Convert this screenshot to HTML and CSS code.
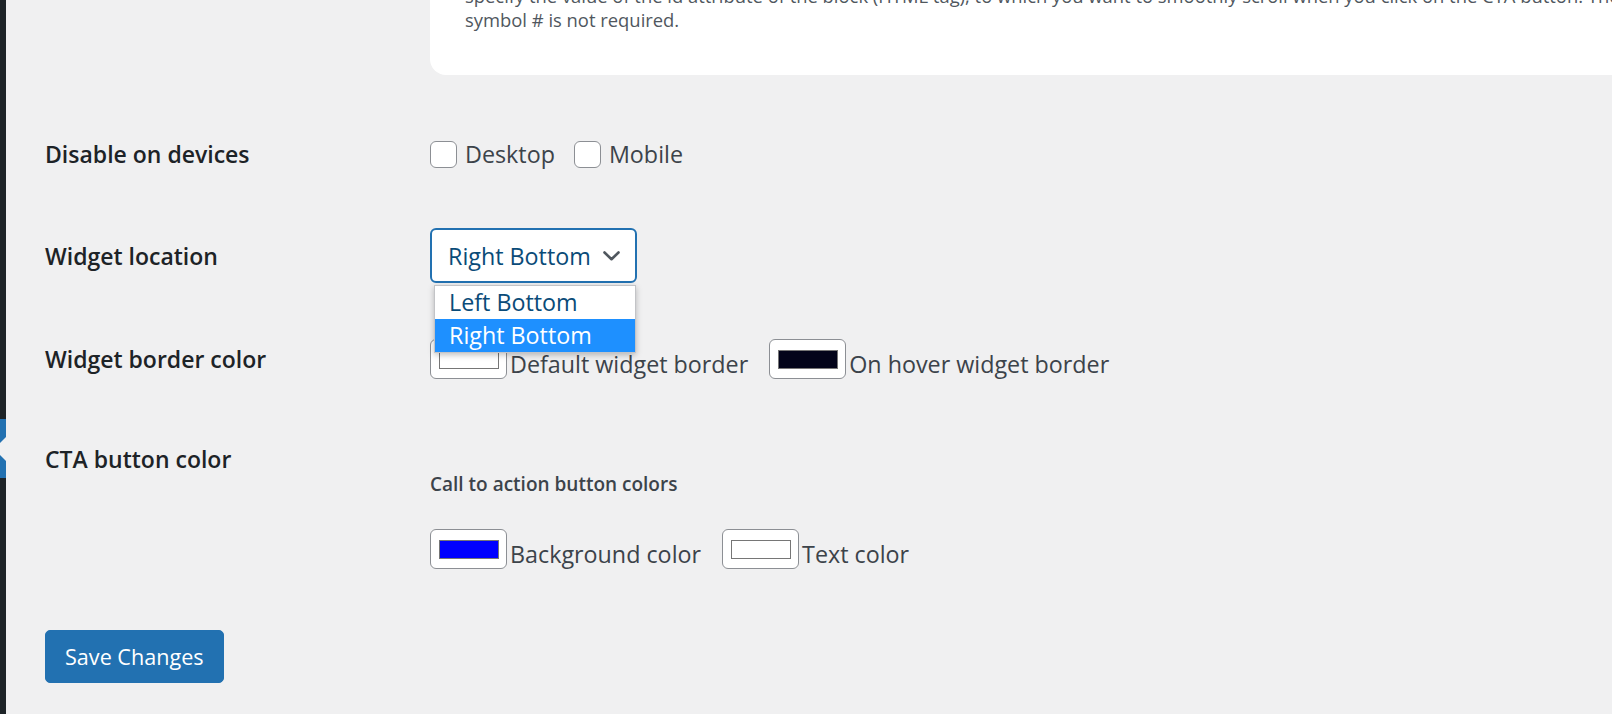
FILE: index.html
```html
<!DOCTYPE html>
<html>
<head>
    <meta charset="utf-8" />
    <title>Widget settings</title>
    <link rel="stylesheet" href="styles.css">
</head>
<body>
    <div class="wrap">
        <aside class="adminmenu">
            <div class="menu-current"></div>
        </aside>

        <main class="content">
            <div class="notice-card">
                <p class="description">If you want the button to scroll the page to a block instead of following a link, leave the link field empty and<br>specify the value of the id attribute of the block (HTML tag), to which you want to smoothly scroll when you click on the CTA button. The<br>symbol # is not required.</p>
            </div>

            <form class="settings">
                <div class="form-row row-devices">
                    <div class="row-label">Disable on devices</div>
                    <div class="row-field">
                        <label class="check"><input type="checkbox" />Desktop</label>
                        <label class="check"><input type="checkbox" />Mobile</label>
                    </div>
                </div>

                <div class="form-row row-location">
                    <div class="row-label">Widget location</div>
                    <div class="row-field">
                        <div class="select-wrap">
                            <div class="select">
                                <span>Right Bottom</span>
                                <svg width="17" height="10" viewBox="0 0 17 10"><path d="M1.5 1.5 L8.5 8.2 L15.5 1.5" fill="none" stroke="#50575e" stroke-width="2.6" stroke-linecap="round" stroke-linejoin="round"/></svg>
                            </div>
                            <ul class="select-options">
                                <li>Left Bottom</li>
                                <li class="selected">Right Bottom</li>
                            </ul>
                        </div>
                    </div>
                </div>

                <div class="form-row row-border">
                    <div class="row-label">Widget border color</div>
                    <div class="row-field color-list">
                        <div class="color-field">
                            <button type="button" class="color-btn"><span class="swatch swatch-white"></span></button>
                            <span>Default widget border</span>
                        </div>
                        <div class="color-field">
                            <button type="button" class="color-btn"><span class="swatch swatch-navy"></span></button>
                            <span>On hover widget border</span>
                        </div>
                    </div>
                </div>

                <div class="form-row row-cta">
                    <div class="row-label">CTA button color</div>
                    <div class="row-field cta-field">
                        <h4 class="sub-heading">Call to action button colors</h4>
                        <div class="color-list">
                            <div class="color-field">
                                <button type="button" class="color-btn"><span class="swatch swatch-blue"></span></button>
                                <span>Background color</span>
                            </div>
                            <div class="color-field">
                                <button type="button" class="color-btn"><span class="swatch swatch-white"></span></button>
                                <span>Text color</span>
                            </div>
                        </div>
                    </div>
                </div>

                <p class="submit">
                    <button type="button" class="button-primary">Save Changes</button>
                </p>
            </form>
        </main>
    </div>
</body>
</html>
```

FILE: styles.css
```css
* {
    box-sizing: border-box;
}

html, body {
    margin: 0;
    padding: 0;
}

body {
    height: 714px;
    overflow: hidden;
    background: #f0f0f1;
    font-family: "Open Sans", "Noto Sans", sans-serif;
    color: #3c434a;
}

.wrap {
    display: flex;
    min-height: 714px;
}

/* admin menu edge */

.adminmenu {
    width: 6px;
    flex-shrink: 0;
    background: #1d2327;
}

.menu-current {
    position: relative;
    margin-top: 419px;
    height: 59px;
    background: #2271b1;
}

.menu-current:after {
    content: "";
    position: absolute;
    right: 0;
    top: 50%;
    margin-top: -12px;
    border: 12px solid transparent;
    border-right-color: #f0f0f1;
}

.content {
    flex: 1;
    padding-left: 39px;
}

/* description card */

.notice-card {
    margin: -60px -40px 0 385px;
    padding: 20px 30px 43px 35px;
    background: #fff;
    border-radius: 0 0 0 16px;
}

.description {
    margin: 0;
    font-size: 18.4px;
    line-height: 24px;
    color: #50575e;
    white-space: nowrap;
}

/* rows */

.settings {
    margin-top: 64px;
}

.form-row {
    display: flex;
    align-items: center;
}

.row-label {
    width: 385px;
    flex-shrink: 0;
    font-size: 23px;
    font-weight: 600;
    line-height: 30px;
    color: #1d2327;
}

.row-field {
    font-size: 23.3px;
    line-height: 30px;
}

.row-devices .row-field {
    display: flex;
    align-items: center;
}

.check {
    display: flex;
    align-items: center;
    gap: 8px;
    margin-right: 19px;
}

.check input {
    appearance: none;
    width: 27px;
    height: 27px;
    margin: 0;
    background: #fff;
    border: 1px solid #8c8f94;
    border-radius: 6px;
}

/* select */

.row-location {
    margin-top: 59px;
}

.select-wrap {
    position: relative;
    width: 207px;
}

.select {
    display: flex;
    align-items: center;
    justify-content: space-between;
    height: 55px;
    padding: 0 15px 0 16px;
    background: #fff;
    border: 2px solid #2271b1;
    border-radius: 6px;
    color: #0a4b78;
}

.select-options {
    position: absolute;
    top: calc(100% + 2px);
    left: 4px;
    right: 1px;
    margin: 0;
    padding: 0;
    list-style: none;
    background: #fff;
    border: 1px solid #c3c4c7;
    box-shadow: 0 2px 6px rgba(0, 0, 0, 0.25);
    z-index: 2;
}

.select-options li {
    height: 33px;
    line-height: 33px;
    padding-left: 14px;
    color: #0a4b78;
}

.select-options .selected {
    background: #1e90ff;
    color: #fff;
}

/* colour pickers */

.row-border {
    margin-top: 56px;
}

.color-list {
    display: flex;
    gap: 21px;
}

.color-field {
    display: flex;
    align-items: flex-end;
    gap: 3px;
}

.color-btn {
    display: flex;
    align-items: center;
    justify-content: center;
    width: 77px;
    height: 40px;
    padding: 0;
    background: #fff;
    border: 1px solid #8c8f94;
    border-radius: 6px;
}

.swatch {
    display: block;
    width: 60px;
    height: 19px;
    border: 1px solid #767676;
}

.swatch-white {
    background: #fff;
}

.swatch-navy {
    background: #03041a;
}

.swatch-blue {
    background: #0000ff;
}

.row-cta {
    align-items: flex-start;
    margin-top: 65px;
}

.cta-field {
    padding-top: 28px;
}

.sub-heading {
    margin: 0 0 33px;
    font-size: 19px;
    font-weight: 600;
    line-height: 24px;
    color: #3c434a;
}

/* submit */

.submit {
    margin: 61px 0 0;
}

.button-primary {
    height: 53px;
    padding: 0 19px;
    background: #2271b1;
    border: 1px solid #2271b1;
    border-radius: 5px;
    color: #fff;
    font-family: inherit;
    font-size: 21.6px;
}
```
